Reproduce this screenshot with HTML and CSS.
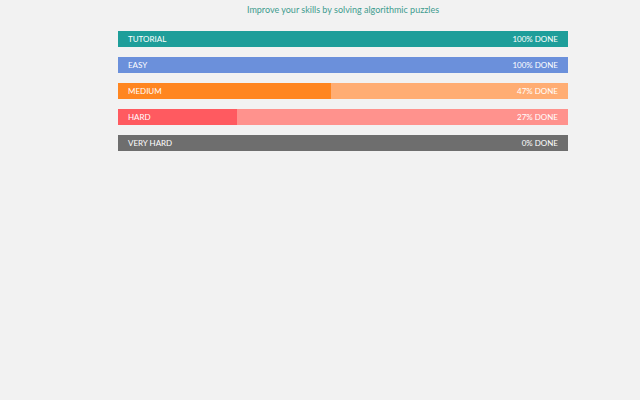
FILE: index.html
```
<!DOCTYPE html>
<html>
<head>
<meta charset="utf-8">
<link rel="stylesheet" href="styles.css">
</head>
<body>
<div class="wrap">
  <p class="title">Improve your skills by solving algorithmic puzzles</p>
  <div class="bars">
    <div class="bar tutorial"><div class="fill" style="width:100%"></div><span class="name">TUTORIAL</span><span class="pct">100% DONE</span></div>
    <div class="bar easy"><div class="fill" style="width:100%"></div><span class="name">EASY</span><span class="pct">100% DONE</span></div>
    <div class="bar medium"><div class="fill" style="width:47.3%"></div><span class="name">MEDIUM</span><span class="pct">47% DONE</span></div>
    <div class="bar hard"><div class="fill" style="width:26.5%"></div><span class="name">HARD</span><span class="pct">27% DONE</span></div>
    <div class="bar vhard"><div class="fill" style="width:0%"></div><span class="name">VERY HARD</span><span class="pct">0% DONE</span></div>
  </div>
</div>
</body>
</html>
```

FILE: styles.css
```
html, body { margin: 0; padding: 0; }
body {
  background: #f2f2f2;
  font-family: Lato, "Open Sans", sans-serif;
  width: 640px;
  height: 400px;
  overflow: hidden;
}
.wrap {
  width: 450px;
  margin-left: 118px;
}
.title {
  margin: 0;
  padding-top: 4px;
  height: 31px;
  box-sizing: border-box;
  text-align: center;
  color: #3f9c8f;
  font-size: 9px;
  line-height: 12px;
}
.bars {
  display: flex;
  flex-direction: column;
  gap: 10px;
}
.bar {
  position: relative;
  height: 16px;
  display: flex;
  align-items: center;
  justify-content: space-between;
  padding: 0 10px;
  color: #fff;
  font-size: 8px;
  line-height: 16px;
}
.fill {
  position: absolute;
  left: 0; top: 0; bottom: 0;
}
.name, .pct { position: relative; }
.tutorial { background: #1e9e9a; }
.tutorial .fill { background: #1e9e9a; }
.easy { background: #6b90db; }
.easy .fill { background: #6b90db; }
.medium { background: #ffad73; }
.medium .fill { background: #ff8620; }
.hard { background: #ff928d; }
.hard .fill { background: #ff5a60; }
.vhard { background: #6e6e6e; }
```
